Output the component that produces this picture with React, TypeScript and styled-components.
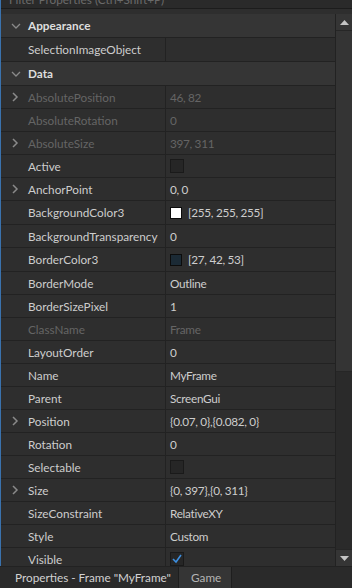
import React from "react";
import styled, { createGlobalStyle } from "styled-components";

const Global = createGlobalStyle`
  html, body { margin: 0; padding: 0; background: #2e2e2e; }
  body { font-family: Lato, "Liberation Sans", sans-serif; }
  * { box-sizing: border-box; }
`;

const Root = styled.div`
  width: 352px;
  height: 588px;
  display: flex;
  flex-direction: column;
  overflow: hidden;
  background: #2e2e2e;
`;

const Main = styled.div`
  flex: 1;
  display: flex;
  flex-direction: column;
  border-left: 1px solid #3a72ad;
  min-height: 0;
`;

const FilterBar = styled.div`
  height: 9px;
  flex: none;
  overflow: hidden;
  background: #2a2a2a;
  border-bottom: 1px solid #1c1c1c;
  padding-left: 8px;
`;

const FilterText = styled.div`
  font-size: 11.75px;
  line-height: 12px;
  color: #6a6a6a;
  margin-top: -6px;
  white-space: nowrap;
`;

const Gap = styled.div`
  height: 5px;
  flex: none;
  background: #2e2e2e;
`;

const Body = styled.div`
  flex: 1;
  display: flex;
  min-height: 0;
`;

const List = styled.div`
  width: 334px;
  display: flex;
  flex-direction: column;
  overflow: hidden;
`;

const Row = styled.div<{ $header?: boolean; $tall?: boolean }>`
  flex: none;
  height: ${(p) => (p.$header || p.$tall ? 24 : 23)}px;
  border-bottom: 1px solid #222222;
  display: grid;
  grid-template-columns: 165px 1fr;
  background: ${(p) => (p.$header ? "#353535" : "#2e2e2e")};
`;

const LabelCell = styled.div<{ $dim?: boolean; $header?: boolean }>`
  display: flex;
  align-items: center;
  position: relative;
  padding-left: 27px;
  font-size: 11.75px;
  white-space: nowrap;
  overflow: hidden;
  font-weight: ${(p) => (p.$header ? 700 : 400)};
  color: ${(p) => (p.$header ? "#dedede" : p.$dim ? "#656565" : "#cdcdcd")};
  border-right: ${(p) => (p.$header ? "none" : "1px solid #222222")};
`;

const ValueCell = styled.div<{ $dim?: boolean }>`
  display: flex;
  align-items: center;
  gap: 6px;
  padding-left: 4px;
  font-size: 11.75px;
  letter-spacing: -0.3px;
  white-space: nowrap;
  color: ${(p) => (p.$dim ? "#656565" : "#cdcdcd")};
`;

const Chevron = styled.svg`
  position: absolute;
  left: 10px;
  top: 50%;
  transform: translateY(-50%);
`;

const CheckBox = styled.div`
  width: 14px;
  height: 14px;
  flex: none;
  background: #262626;
  border: 1px solid #1a1a1a;
  display: flex;
  align-items: center;
  justify-content: center;
`;

const Swatch = styled.div<{ $c: string }>`
  width: 12px;
  height: 12px;
  flex: none;
  background: ${(p) => p.$c};
  border: 1px solid #0c0c0c;
`;

const Scrollbar = styled.div`
  width: 17px;
  border-left: 1px solid #222222;
  display: flex;
  flex-direction: column;
  background: #2a2a2a;
`;

const ScrollBtn = styled.div<{ $bottom?: boolean }>`
  height: 17px;
  flex: none;
  background: #353535;
  display: flex;
  align-items: center;
  justify-content: center;
  border-bottom: ${(p) => (p.$bottom ? "none" : "1px solid #262626")};
  border-top: ${(p) => (p.$bottom ? "1px solid #262626" : "none")};
`;

const ScrollThumb = styled.div`
  height: 341px;
  flex: none;
  background: #343434;
  border-bottom: 1px solid #262626;
`;

const ScrollTrack = styled.div`
  flex: 1;
`;

const TabBar = styled.div`
  height: 22px;
  flex: none;
  display: flex;
  background: #2a2a2a;
  border-top: 1px solid #222;
`;

const Tab = styled.div<{ $active?: boolean }>`
  display: flex;
  align-items: center;
  padding: 0 12px 0 ${(p) => (p.$active ? 15 : 12)}px;
  width: ${(p) => (p.$active ? "179px" : "53px")};
  font-size: 11.75px;
  color: ${(p) => (p.$active ? "#d2d2d2" : "#b4b4b4")};
  background: ${(p) => (p.$active ? "#2a2a2a" : "#353535")};
  border-right: 1px solid #1e1e1e;
  white-space: nowrap;
`;

type Prop = {
  name: string;
  value?: string;
  dim?: boolean;
  expand?: boolean;
  kind?: "check" | "checked" | "color";
  color?: string;
  tall?: boolean;
};

const RightChevron = () => (
  <Chevron width="8" height="10" viewBox="0 0 8 10">
    <polyline points="2,1 6,5 2,9" fill="none" stroke="#8a8a8a" strokeWidth="1.5" />
  </Chevron>
);

const DownChevron = () => (
  <Chevron width="10" height="8" viewBox="0 0 10 8">
    <polyline points="1,2 5,6 9,2" fill="none" stroke="#8a8a8a" strokeWidth="1.3" />
  </Chevron>
);

const data: Prop[] = [
  { name: "AbsolutePosition", value: "46, 82", dim: true, expand: true },
  { name: "AbsoluteRotation", value: "0", dim: true },
  { name: "AbsoluteSize", value: "397, 311", dim: true, expand: true },
  { name: "Active", kind: "check" },
  { name: "AnchorPoint", value: "0, 0", expand: true },
  { name: "BackgroundColor3", value: "[255, 255, 255]", kind: "color", color: "#ffffff", tall: true },
  { name: "BackgroundTransparency", value: "0" },
  { name: "BorderColor3", value: "[27, 42, 53]", kind: "color", color: "#1b2a35", tall: true },
  { name: "BorderMode", value: "Outline" },
  { name: "BorderSizePixel", value: "1" },
  { name: "ClassName", value: "Frame", dim: true },
  { name: "LayoutOrder", value: "0" },
  { name: "Name", value: "MyFrame" },
  { name: "Parent", value: "ScreenGui" },
  { name: "Position", value: "{0.07, 0},{0.082, 0}", expand: true },
  { name: "Rotation", value: "0" },
  { name: "Selectable", kind: "check" },
  { name: "Size", value: "{0, 397},{0, 311}", expand: true },
  { name: "SizeConstraint", value: "RelativeXY" },
  { name: "Style", value: "Custom" },
  { name: "Visible", kind: "checked" },
];

const PropRow = ({ p }: { p: Prop }) => (
  <Row $tall={p.tall}>
    <LabelCell $dim={p.dim}>
      {p.expand && <RightChevron />}
      {p.name}
    </LabelCell>
    <ValueCell $dim={p.dim}>
      {p.kind === "check" && <CheckBox />}
      {p.kind === "checked" && (
        <CheckBox>
          <svg width="12" height="12" viewBox="0 0 12 12">
            <polyline points="2,6 5,9 10,2" fill="none" stroke="#3d8fe0" strokeWidth="1.6" />
          </svg>
        </CheckBox>
      )}
      {p.kind === "color" && <Swatch $c={p.color!} />}
      {p.value}
    </ValueCell>
  </Row>
);

export default function App() {
  return (
    <Root>
      <Global />
      <Main>
        <FilterBar>
          <FilterText>Filter Properties (Ctrl+Shift+P)</FilterText>
        </FilterBar>
        <Gap />
        <Body>
          <List>
            <Row $header>
              <LabelCell $header>
                <DownChevron />
                Appearance
              </LabelCell>
            </Row>
            <Row $tall>
              <LabelCell>SelectionImageObject</LabelCell>
              <ValueCell />
            </Row>
            <Row $header>
              <LabelCell $header>
                <DownChevron />
                Data
              </LabelCell>
            </Row>
            {data.map((p) => (
              <PropRow key={p.name} p={p} />
            ))}
          </List>
          <Scrollbar>
            <ScrollBtn>
              <svg width="9" height="5" viewBox="0 0 9 5">
                <polygon points="0,5 4.5,0 9,5" fill="#c4c4c4" />
              </svg>
            </ScrollBtn>
            <ScrollThumb />
            <ScrollTrack />
            <ScrollBtn $bottom>
              <svg width="9" height="5" viewBox="0 0 9 5">
                <polygon points="0,0 4.5,5 9,0" fill="#c4c4c4" />
              </svg>
            </ScrollBtn>
          </Scrollbar>
        </Body>
      </Main>
      <TabBar>
        <Tab $active>Properties - Frame "MyFrame"</Tab>
        <Tab>Game</Tab>
      </TabBar>
    </Root>
  );
}
